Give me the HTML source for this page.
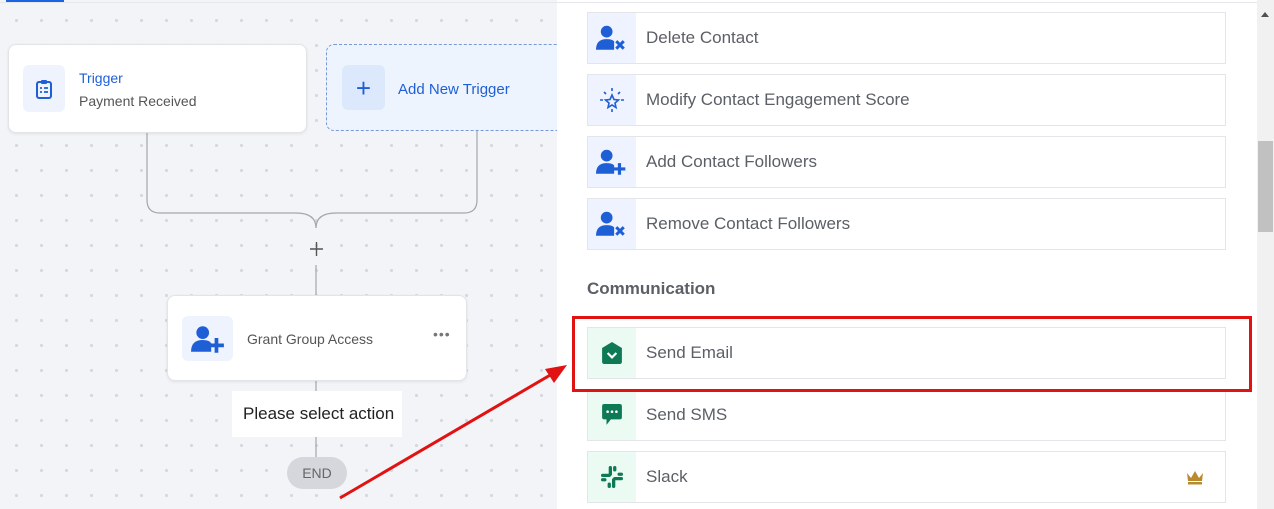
<!DOCTYPE html>
<html><head><meta charset="utf-8"><style>
*{box-sizing:border-box;margin:0;padding:0}
body{width:1274px;height:509px;overflow:hidden;position:relative;font-family:"Liberation Sans",sans-serif;background:#fff}
#canvas{position:absolute;left:0;top:0;width:557px;height:509px;background-color:#f3f4f7;background-image:radial-gradient(circle,#d6d8de 1.4px,transparent 1.8px);background-size:25px 25px;background-position:4px 8px}
.card{position:absolute;background:#fff;border:1px solid #e2e4e8;border-radius:8px;box-shadow:0 1px 3px rgba(0,0,0,.08)}
.ib{position:absolute;background:#eef3fe;border-radius:6px;display:flex;align-items:center;justify-content:center}
.abs{position:absolute}
.item{position:absolute;left:587px;width:639px;height:52px;border:1px solid #e3e5e8;background:#fff}
.item .ic{position:absolute;left:0;top:0;width:48px;height:50px;background:#eef3ff;display:flex;align-items:center;justify-content:center}
.item.g .ic{background:#ebfbf3}
.item .t{position:absolute;left:58px;top:15px;font-size:17px;color:#5b5f66}
</style></head><body>
<div id="canvas"></div>
<div class="abs" style="left:6px;top:0;width:58px;height:2px;background:#1a66e0"></div>
<svg class="abs" style="left:0;top:0" width="557" height="509">
<path d="M147 132 V200 Q147 213 160 213 H296 Q316 213 316 228" fill="none" stroke="#a3a6ad" stroke-width="1.2"/>
<path d="M477 130 V200 Q477 213 464 213 H336 Q316 213 316 228" fill="none" stroke="#a3a6ad" stroke-width="1.2"/>
<path d="M310 249 H323 M316.5 242 V256" stroke="#555" stroke-width="1.4"/>
<path d="M316 265 V295 M316 380 V392 M316 436 V458" stroke="#a3a6ad" stroke-width="1.2"/>
</svg>
<div class="card" style="left:8px;top:44px;width:299px;height:89px">
<div class="ib" style="left:14px;top:20px;width:42px;height:47px">
<svg width="20" height="22" viewBox="0 0 20 22"><rect x="3" y="4" width="14" height="16" rx="2" fill="none" stroke="#1f5fd6" stroke-width="2"/><rect x="7" y="2" width="6" height="4" rx="1" fill="#1f5fd6"/><path d="M6 10h2M10 10h4M6 14h2M10 14h4" stroke="#1f5fd6" stroke-width="1.8"/></svg></div>
<div class="abs" style="left:70px;top:25px;font-size:14px;color:#1f5fd6">Trigger</div>
<div class="abs" style="left:70px;top:48px;font-size:14px;color:#555">Payment Received</div>
</div>
<div class="abs" style="left:326px;top:44px;width:240px;height:87px;background:#eef4fe;border:1px dashed #7898d8;border-radius:8px">
<div class="ib" style="left:15px;top:20px;width:43px;height:45px;background:#dce8fc"><span style="color:#1f5fd6;font-size:26px;line-height:1">+</span></div>
<div class="abs" style="left:71px;top:36px;font-size:15px;color:#1f5fd6">Add New Trigger</div>
</div>
<div class="abs" style="left:557px;top:0;width:717px;height:509px;background:#fff"></div>
<div class="abs" style="left:0;top:2px;width:1257px;height:1px;background:#e6e7ea"></div>
<div class="card" style="left:167px;top:295px;width:300px;height:86px">
<div class="ib" style="left:14px;top:20px;width:51px;height:45px">
<svg width="36" height="28" viewBox="0 0 34 26"><circle cx="12" cy="7" r="6" fill="#1f5fd6"/><path d="M1 25 Q1 14 12 14 Q18 14 20 17 V25Z" fill="#1f5fd6"/><path d="M25 12V26M18 19H32" stroke="#1f5fd6" stroke-width="3.5"/></svg></div>
<div class="abs" style="left:79px;top:35px;font-size:14px;color:#555">Grant Group Access</div>
<div class="abs" style="left:265px;top:30px;font-size:14px;color:#777;letter-spacing:1px">•••</div>
</div>
<div class="abs" style="left:232px;top:391px;width:170px;height:46px;background:#fff;font-size:17px;color:#222;padding:13px 0 0 11px">Please select action</div>
<div class="abs" style="left:287px;top:457px;width:60px;height:32px;background:#d5d7dc;border-radius:16px;font-size:14px;color:#666;text-align:center;line-height:32px">END</div>

<div class="item" style="top:12px"><div class="ic"><svg width="32" height="26" viewBox="0 0 30 24"><circle cx="10" cy="6" r="5.5" fill="#1f5fd6"/><path d="M0 23 Q0 13 10 13 Q15 13 17 15 V23Z" fill="#1f5fd6"/><path d="M19 15L26 22M26 15L19 22" stroke="#1f5fd6" stroke-width="2.8"/></svg></div><div class="t">Delete Contact</div></div>
<div class="item" style="top:74px"><div class="ic"><svg width="26" height="26" viewBox="0 0 26 26"><path d="M13 8L15 12.5L19.5 13L16 16L17 20.5L13 18L9 20.5L10 16L6.5 13L11 12.5Z" fill="none" stroke="#1f5fd6" stroke-width="1.6"/><path d="M13 1V4M13 22V25M1 13H4M22 13H25M5 5L7 7M21 5L19 7" stroke="#1f5fd6" stroke-width="1.6"/></svg></div><div class="t">Modify Contact Engagement Score</div></div>
<div class="item" style="top:136px"><div class="ic"><svg width="32" height="26" viewBox="0 0 30 24"><circle cx="10" cy="6" r="5.5" fill="#1f5fd6"/><path d="M0 23 Q0 13 10 13 Q15 13 17 15 V23Z" fill="#1f5fd6"/><path d="M22 13V24M16.5 18.5H27.5" stroke="#1f5fd6" stroke-width="3"/></svg></div><div class="t">Add Contact Followers</div></div>
<div class="item" style="top:198px"><div class="ic"><svg width="32" height="26" viewBox="0 0 30 24"><circle cx="10" cy="6" r="5.5" fill="#1f5fd6"/><path d="M0 23 Q0 13 10 13 Q15 13 17 15 V23Z" fill="#1f5fd6"/><path d="M19 15L26 22M26 15L19 22" stroke="#1f5fd6" stroke-width="2.8"/></svg></div><div class="t">Remove Contact Followers</div></div>
<div class="abs" style="left:587px;top:279px;font-size:17px;font-weight:bold;color:#5b5f66">Communication</div>
<div class="item g" style="top:327px"><div class="ic"><svg width="20" height="22" viewBox="0 0 18 20"><path d="M9 0L18 5.5V18Q18 20 16 20H2Q0 20 0 18V5.5Z" fill="#0e7a55"/><path d="M5 10L9 14L13 10" fill="none" stroke="#fff" stroke-width="2"/></svg></div><div class="t">Send Email</div></div>
<div class="item g" style="top:389px"><div class="ic"><svg width="20" height="22" viewBox="0 0 18 20"><path d="M2 0H16Q18 0 18 2V12Q18 14 16 14H8L4 19V14H2Q0 14 0 12V2Q0 0 2 0Z" fill="#0e7a55"/><circle cx="5" cy="7" r="1.2" fill="#fff"/><circle cx="9" cy="7" r="1.2" fill="#fff"/><circle cx="13" cy="7" r="1.2" fill="#fff"/></svg></div><div class="t">Send SMS</div></div>
<div class="item g" style="top:451px"><div class="ic"><svg width="22" height="22" viewBox="0 0 20 20" fill="#0e7a55"><rect x="7" y="0" width="3" height="9" rx="1.5"/><rect x="11" y="0" width="3" height="5" rx="1.5"/><rect x="10" y="11" width="3" height="9" rx="1.5"/><rect x="6" y="15" width="3" height="5" rx="1.5"/><rect x="0" y="7" width="9" height="3" rx="1.5"/><rect x="0" y="11" width="5" height="3" rx="1.5"/><rect x="11" y="10" width="9" height="3" rx="1.5"/><rect x="15" y="6" width="5" height="3" rx="1.5"/></svg></div><div class="t">Slack</div>
<svg class="abs" style="left:598px;top:18px" width="18" height="15" viewBox="0 0 18 15"><path d="M1 3L5 8L9 1L13 8L17 3L16 11H2Z" fill="#b98b2e"/><rect x="2" y="12" width="14" height="2.5" fill="#b98b2e"/></svg></div>
<div class="abs" style="left:572px;top:316px;width:680px;height:76px;border:3px solid #e01212"></div>
<svg class="abs" style="left:0;top:0" width="1274" height="509"><path d="M340 498L552 374" stroke="#e01212" stroke-width="3"/><path d="M567 365L545 369L554 383Z" fill="#e01212"/></svg>
<div class="abs" style="left:1257px;top:0;width:17px;height:509px;background:#f1f1f1"></div>
<div class="abs" style="left:1258px;top:141px;width:15px;height:91px;background:#c1c1c1"></div>
<div class="abs" style="left:1261px;top:12px;width:0;height:0;border-left:4px solid transparent;border-right:4px solid transparent;border-bottom:5px solid #505050"></div>
</body></html>
